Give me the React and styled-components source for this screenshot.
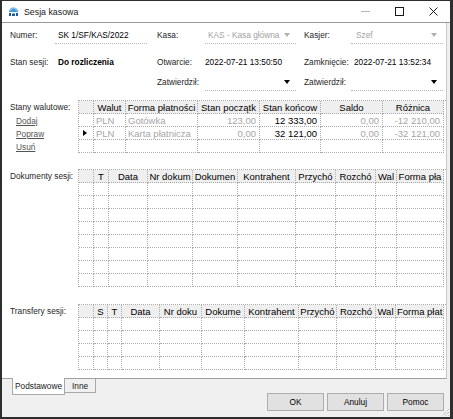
import styled, { createGlobalStyle } from "styled-components";

const GlobalStyle = createGlobalStyle`
  html, body {
    margin: 0;
    padding: 0;
    background: #ffffff;
  }
  body {
    font-family: "Liberation Sans", Arial, sans-serif;
  }
  * {
    box-sizing: border-box;
  }
`;

// header captions are the parts the narrow columns actually show
const stanyCols = [
  { w: 15, t: "" },
  { w: 32, t: "Walut" },
  { w: 72, t: "Forma płatności" },
  { w: 62, t: "Stan początk" },
  { w: 61, t: "Stan końcow" },
  { w: 62, t: "Saldo" },
  { w: 61, t: "Różnica" },
];

const stanyRows = [
  [
    { t: "" },
    { t: "PLN", muted: true },
    { t: "Gotówka", muted: true },
    { t: "123,00", muted: true, right: true },
    { t: "12 333,00", right: true },
    { t: "0,00", muted: true, right: true },
    { t: "-12 210,00", muted: true, right: true },
  ],
  [
    { t: "", marker: true },
    { t: "PLN", muted: true },
    { t: "Karta płatnicza", muted: true },
    { t: "0,00", muted: true, right: true },
    { t: "32 121,00", right: true },
    { t: "0,00", muted: true, right: true },
    { t: "-32 121,00", muted: true, right: true },
  ],
  [],
];

const dokumentyCols = [
  { w: 15, t: "" },
  { w: 15, t: "T" },
  { w: 39, t: "Data" },
  { w: 45, t: "Nr dokum" },
  { w: 45, t: "Dokumen" },
  { w: 58, t: "Kontrahent" },
  { w: 40, t: "Przychó" },
  { w: 40, t: "Rozchó" },
  { w: 21, t: "Wal" },
  { w: 47, t: "Forma pła" },
];

const transferyCols = [
  { w: 15, t: "" },
  { w: 14, t: "S" },
  { w: 14, t: "T" },
  { w: 38, t: "Data" },
  { w: 42, t: "Nr doku" },
  { w: 43, t: "Dokume" },
  { w: 54, t: "Kontrahent" },
  { w: 38, t: "Przychó" },
  { w: 39, t: "Rozchó" },
  { w: 20, t: "Wal" },
  { w: 48, t: "Forma płat" },
];

const AppIcon = () => (
  <svg width="11" height="11" viewBox="0 0 11 11">
    <path d="M1 6 A4.5 4.5 0 0 1 10 6 Z" fill="#3f97d6" />
    <path d="M2.5 5 A3 3 0 0 1 8.5 5" fill="none" stroke="#bfe0f5" strokeWidth="0.8" />
    <rect x="1" y="7" width="2" height="3" fill="#1d5b96" />
    <rect x="4" y="7.5" width="3" height="2.5" fill="#1d5b96" />
    <rect x="8" y="7" width="2" height="3" fill="#1d5b96" />
  </svg>
);

const CloseIcon = () => (
  <svg width="9" height="9" viewBox="0 0 9 9">
    <path d="M0.5 0.5 L8.5 8.5 M8.5 0.5 L0.5 8.5" stroke="#1a1a1a" strokeWidth="1" />
  </svg>
);

const Grip = () => (
  <svg width="10" height="10" viewBox="0 0 10 10">
    <path
      d="M9 2 L2 9 M9 5 L5 9 M9 8 L8 9"
      stroke="#a8a8a8"
      strokeWidth="1"
      strokeDasharray="1 1"
    />
  </svg>
);

const DataGrid = ({ cols, rows, count }) => {
  const template = cols.map((c) => `${c.w}px`).join(" ");
  const body = Array.from({ length: count }, (_, i) => rows[i] || []);
  return (
    <Grid $cols={template}>
      {cols.map((c, i) => (
        <HeadCell key={`h${i}`}>{c.t}</HeadCell>
      ))}
      {body.map((row, r) =>
        cols.map((_, i) => {
          const cell = row[i] || { t: "" };
          return (
            <Cell key={`${r}-${i}`} $muted={cell.muted} $right={cell.right}>
              {cell.marker ? <Marker /> : cell.t}
            </Cell>
          );
        })
      )}
    </Grid>
  );
};

const App = () => {
  return (
    <Window>
      <GlobalStyle />
      <TitleBar>
        <AppIcon />
        <Title>Sesja kasowa</Title>
        <Controls>
          <Control>
            <MinLine />
          </Control>
          <Control>
            <MaxBox />
          </Control>
          <Control>
            <CloseIcon />
          </Control>
        </Controls>
      </TitleBar>

      <Page>
        <FieldRow $mt={3}>
          <Label>Numer:</Label>
          <Field $line>SK 1/SF/KAS/2022</Field>
          <Label $indent={10}>Kasa:</Label>
          <Field $line $muted>
            KAS - Kasa główna
            <Arrow $muted />
          </Field>
          <Label $indent={8}>Kasjer:</Label>
          <Field $line $muted $pad={5}>
            Szef
            <Arrow $muted />
          </Field>
        </FieldRow>
        <FieldRow $mt={9}>
          <Label>Stan sesji:</Label>
          <Field $bold>Do rozliczenia</Field>
          <Label $indent={10}>Otwarcie:</Label>
          <Field $pad={0}>2022-07-21 13:50:50</Field>
          <Label $indent={8}>Zamknięcie:</Label>
          <Field $pad={3}>2022-07-21 13:52:34</Field>
        </FieldRow>
        <FieldRow $mt={2}>
          <span />
          <span />
          <Label $indent={10}>Zatwierdził:</Label>
          <Field $line>
            <Arrow />
          </Field>
          <Label $indent={8}>Zatwierdził:</Label>
          <Field $line>
            <Arrow />
          </Field>
        </FieldRow>

        <Section $mt={9}>
          <Side>
            <SideLabel>Stany walutowe:</SideLabel>
            <LinkItem>Dodaj</LinkItem>
            <LinkItem>Popraw</LinkItem>
            <LinkItem>Usuń</LinkItem>
          </Side>
          <DataGrid cols={stanyCols} rows={stanyRows} count={3} />
        </Section>

        <Section $mt={16}>
          <Side>
            <SideLabel>Dokumenty sesji:</SideLabel>
          </Side>
          <DataGrid cols={dokumentyCols} rows={[]} count={8} />
        </Section>

        <Section $mt={17}>
          <Side>
            <SideLabel>Transfery sesji:</SideLabel>
          </Side>
          <DataGrid cols={transferyCols} rows={[]} count={4} />
        </Section>
      </Page>

      <Footer>
        <Tabs>
          <Tab $active>Podstawowe</Tab>
          <Tab>Inne</Tab>
        </Tabs>
        <Buttons>
          <Button>OK</Button>
          <Button>Anuluj</Button>
          <Button>Pomoc</Button>
        </Buttons>
      </Footer>
      <GripBox>
        <Grip />
      </GripBox>
    </Window>
  );
};

export default App;

const Window = styled.div`
  position: relative;
  width: 453px;
  height: 419px;
  display: flex;
  flex-direction: column;
  background: #f0f0f0;
  border-style: solid;
  border-color: #2e2e2e;
  border-width: 1px 3px 2px 2px;
  overflow: hidden;
`;

const TitleBar = styled.div`
  height: 22px;
  flex: none;
  display: flex;
  align-items: center;
  padding-left: 6px;
  background: #ffffff;
  border-bottom: 1px solid #9a9a9a;
`;

const Title = styled.span`
  margin-left: 5px;
  font-size: 8.8px;
  color: #1a1a1a;
`;

const Controls = styled.div`
  margin-left: auto;
  display: flex;
  height: 100%;
`;

const Control = styled.div`
  width: 34px;
  height: 100%;
  display: flex;
  align-items: center;
  justify-content: center;
`;

const MinLine = styled.div`
  width: 9px;
  height: 1px;
  background: #b5b5b5;
`;

const MaxBox = styled.div`
  width: 9px;
  height: 9px;
  border: 1px solid #1a1a1a;
`;

const Page = styled.div`
  height: 356px;
  flex: none;
  margin-right: 3px;
  background: #ffffff;
  border-right: 1px solid #c8c8c8;
  border-bottom: 1px solid #a0a0a0;
  padding-left: 8px;
  font-size: 8.3px;
  color: #1a1a1a;
`;

const FieldRow = styled.div`
  display: grid;
  grid-template-columns: 45px 92px 58px 91px 55px 92px;
  height: 18px;
  margin-top: ${(p) => p.$mt}px;
  align-items: stretch;
`;

const Label = styled.div`
  display: flex;
  align-items: center;
  padding-left: ${(p) => p.$indent || 0}px;
  color: #262626;
  white-space: nowrap;
`;

const Field = styled.div`
  display: flex;
  align-items: center;
  padding-left: ${(p) => (p.$pad !== undefined ? p.$pad : 3)}px;
  padding-right: 6px;
  white-space: nowrap;
  color: ${(p) => (p.$muted ? "#a3a3a3" : "#000000")};
  font-weight: ${(p) => (p.$bold ? 700 : 400)};
  border-bottom: ${(p) => (p.$line ? "1px dotted #b8b8b8" : "none")};
`;

const Arrow = styled.span`
  margin-left: auto;
  width: 0;
  height: 0;
  border-left: 3.5px solid transparent;
  border-right: 3.5px solid transparent;
  border-top: 4px solid ${(p) => (p.$muted ? "#b0b0b0" : "#000000")};
`;

const Section = styled.div`
  display: grid;
  grid-template-columns: 68px auto;
  margin-top: ${(p) => p.$mt}px;
`;

const Side = styled.div`
  display: flex;
  flex-direction: column;
`;

const SideLabel = styled.div`
  height: 14px;
  display: flex;
  align-items: center;
  color: #262626;
  white-space: nowrap;
`;

const LinkItem = styled.a`
  height: 13px;
  display: flex;
  align-items: center;
  margin-left: 6px;
  color: #555555;
  text-decoration: underline;
  cursor: pointer;
`;

const Grid = styled.div`
  display: grid;
  grid-template-columns: ${(p) => p.$cols};
  grid-auto-rows: 13px;
  border-top: 1px dotted #ababab;
  border-left: 1px dotted #ababab;
  font-size: 9.5px;
  align-self: start;
`;

const HeadCell = styled.div`
  display: flex;
  align-items: center;
  justify-content: center;
  justify-content: safe center;
  overflow: hidden;
  white-space: nowrap;
  padding: 0 1px;
  background: #efefef;
  color: #000000;
  border-right: 1px dotted #ababab;
  border-bottom: 1px dotted #ababab;
`;

const Cell = styled.div`
  display: flex;
  align-items: center;
  justify-content: ${(p) => (p.$right ? "flex-end" : "flex-start")};
  overflow: hidden;
  white-space: nowrap;
  padding: 0 3px 0 2px;
  background: #ffffff;
  color: ${(p) => (p.$muted ? "#a6a6a6" : "#000000")};
  border-right: 1px dotted #ababab;
  border-bottom: 1px dotted #ababab;
`;

const Marker = styled.span`
  width: 0;
  height: 0;
  margin-left: 2px;
  border-top: 3.5px solid transparent;
  border-bottom: 3.5px solid transparent;
  border-left: 4px solid #000000;
`;

const Footer = styled.div`
  flex: 1;
  display: flex;
  align-items: flex-start;
  padding: 0 6px 0 10px;
  font-size: 8.3px;
  color: #1a1a1a;
`;

const Tabs = styled.div`
  display: flex;
  align-items: flex-start;
`;

const Tab = styled.div`
  height: ${(p) => (p.$active ? 17 : 14)}px;
  margin-top: ${(p) => (p.$active ? -1 : 0)}px;
  padding: 0 ${(p) => (p.$active ? 2 : 7)}px;
  display: flex;
  align-items: center;
  background: ${(p) => (p.$active ? "#ffffff" : "#f0f0f0")};
  border: 1px solid #a8a8a8;
  border-top: none;
  border-left: ${(p) => (p.$active ? "1px solid #a8a8a8" : "none")};
`;

const Buttons = styled.div`
  margin-left: auto;
  margin-top: 14px;
  display: flex;
  gap: 3px;
`;

const Button = styled.button`
  width: 57px;
  height: 18px;
  padding: 0;
  font-family: "Liberation Sans", Arial, sans-serif;
  font-size: 8.3px;
  color: #000000;
  background: #e1e1e1;
  border: 1px solid #adadad;
`;

const GripBox = styled.div`
  position: absolute;
  right: 0;
  bottom: 0;
  width: 10px;
  height: 10px;
  display: flex;
`;
